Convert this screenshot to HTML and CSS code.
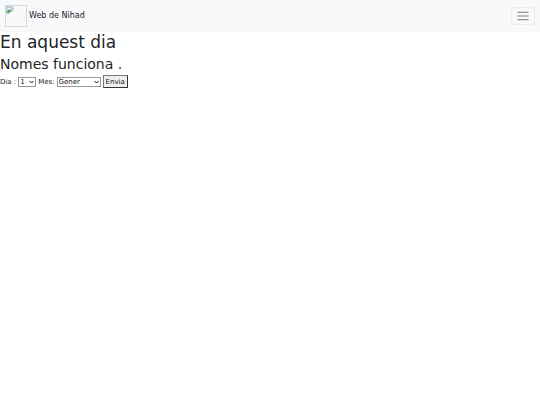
FILE: index.html
```html
<!DOCTYPE html>
<html lang="ca">
<head>
<meta charset="utf-8">
<title>Web de Nihad</title>
<link rel="stylesheet" href="styles.css">
</head>
<body>
<nav class="navbar">
  <a class="brand" href="#">
    <span class="logo">
      <svg class="broken" viewBox="0 0 14 14" aria-hidden="true">
        <path d="M1 1h9l3 3v3L5 13H1z" fill="#c5d5f3" stroke="#a5a9ad"/>
        <path d="M2 12V9l3-3 5 2-5 4z" fill="#4fa34a"/>
        <path d="M3 4h4v2H3z" fill="#fff"/>
        <path d="M10 1v3h3z" fill="#fff" stroke="#a5a9ad"/>
      </svg>
    </span>
    Web de Nihad
  </a>
  <button class="toggler" type="button" aria-label="Menu">
    <svg class="bars" viewBox="0 0 30 30" aria-hidden="true">
      <path d="M4 7h22M4 15h22M4 23h22" stroke="#6f7071" stroke-width="2" stroke-linecap="round"/>
    </svg>
  </button>
</nav>
<main>
  <h1>En aquest dia</h1>
  <h2>Nomes funciona .</h2>
  <form class="date-form">
    <label for="dia">Dia :</label>
    <select id="dia" class="day"><option>1</option><option>2</option><option>3</option></select>
    <label for="mes">Mes:</label>
    <select id="mes" class="month"><option>Gener</option><option>Febrer</option><option>Març</option></select>
    <button class="send" type="submit">Envia</button>
  </form>
</main>
</body>
</html>
```
FILE: styles.css
```css
* { box-sizing: border-box; }
body {
  margin: 0;
  background: #fff;
  color: #212529;
  font-family: "DejaVu Sans", sans-serif;
  font-size: 7px;
  line-height: 10px;
}
.navbar {
  display: flex;
  align-items: center;
  justify-content: space-between;
  padding: 5px;
  background: #f8f9fa;
}
.brand {
  display: flex;
  align-items: center;
  gap: 2px;
  color: #1b1c1d;
  font-size: 8px;
  text-decoration: none;
}
.logo {
  width: 22px;
  height: 22px;
  border: 1px solid #d6d8da;
}
.broken { display: block; width: 8px; height: 8px; }
.toggler {
  display: flex;
  align-items: center;
  justify-content: center;
  width: 24px;
  height: 18px;
  padding: 0;
  border: 1px solid #e9eaeb;
  border-radius: 2px;
  background: transparent;
}
.bars { width: 14px; height: 14px; }
h1, h2 { margin: 0 0 3px; font-weight: 400; }
h1 { font-size: 17px; line-height: 21px; }
h2 { font-size: 14px; line-height: 16px; }
.date-form { display: flex; align-items: center; gap: 2px; }
select, .send {
  margin: 0;
  color: #111;
  font-family: inherit;
  font-size: 7px;
}
select {
  height: 10px;
  padding: 0 1px;
  border: 1px solid #999;
  border-radius: 0;
  appearance: none;
  background: #fff url("data:image/svg+xml,%3Csvg xmlns='http://www.w3.org/2000/svg' viewBox='0 0 5 4'%3E%3Cpath d='M.5 1l2 2 2-2' fill='none' stroke='%23111'/%3E%3C/svg%3E") right 1px center / 5px 4px no-repeat;
}
.day { width: 18px; }
.month { width: 44px; }
.send {
  height: 13px;
  padding: 0 2px;
  border: 1px solid;
  border-color: #777 #333 #333 #777;
  background: #efefef;
}
```
